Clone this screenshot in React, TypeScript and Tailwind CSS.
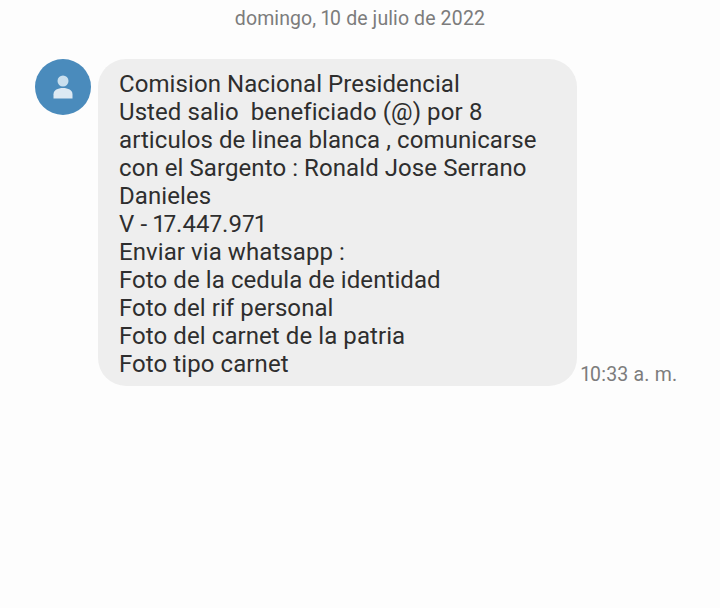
const lines = [
  "Comision Nacional Presidencial",
  "Usted salio  beneficiado (@) por 8",
  "articulos de linea blanca , comunicarse",
  "con el Sargento : Ronald Jose Serrano",
  "Danieles",
  "V - 17.447.971",
  "Enviar via whatsapp :",
  "Foto de la cedula de identidad",
  "Foto del rif personal",
  "Foto del carnet de la patria",
  "Foto tipo carnet",
];

export default function App() {
  return (
    <div className="h-[608px] w-[720px] overflow-hidden bg-[#fdfdfd] font-['Roboto',sans-serif] proportional-nums">
      {/* Date */}
      <div className="pt-[7px] text-center text-[19.5px] leading-[24px] tracking-[0.1px] text-[#7c7c7c]">
        domingo, 10 de julio de 2022
      </div>

      {/* Message */}
      <div className="mt-[28px] flex items-start pl-[35px]">
        <div className="flex h-[56px] w-[56px] items-center justify-center rounded-full bg-[#4a8bbc]">
          <svg width="20" height="24" viewBox="0 0 20 24">
            <circle cx="10" cy="6" r="5.5" fill="#c9dfee" />
            <path d="M.5 23.5v-4.2c0-4.2 4.3-6.3 9.5-6.3s9.5 2.1 9.5 6.3v4.2z" fill="#dce9f3" />
          </svg>
        </div>
        <div className="ml-[7px] w-[479px] rounded-[28px] bg-[#eeeeee] pb-[8px] pl-[21px] pt-[11px] text-[24px] leading-[28px] tracking-[0.08px] text-[#2e2e2e]">
          {lines.map((line, i) => (
            <div key={i} className="whitespace-pre">
              {line}
            </div>
          ))}
        </div>
        <div className="ml-[4px] -mb-[1px] self-end text-[19.5px] leading-[24px] tracking-[0.2px] text-[#7c7c7c]">
          10:33 a. m.
        </div>
      </div>
    </div>
  );
}
